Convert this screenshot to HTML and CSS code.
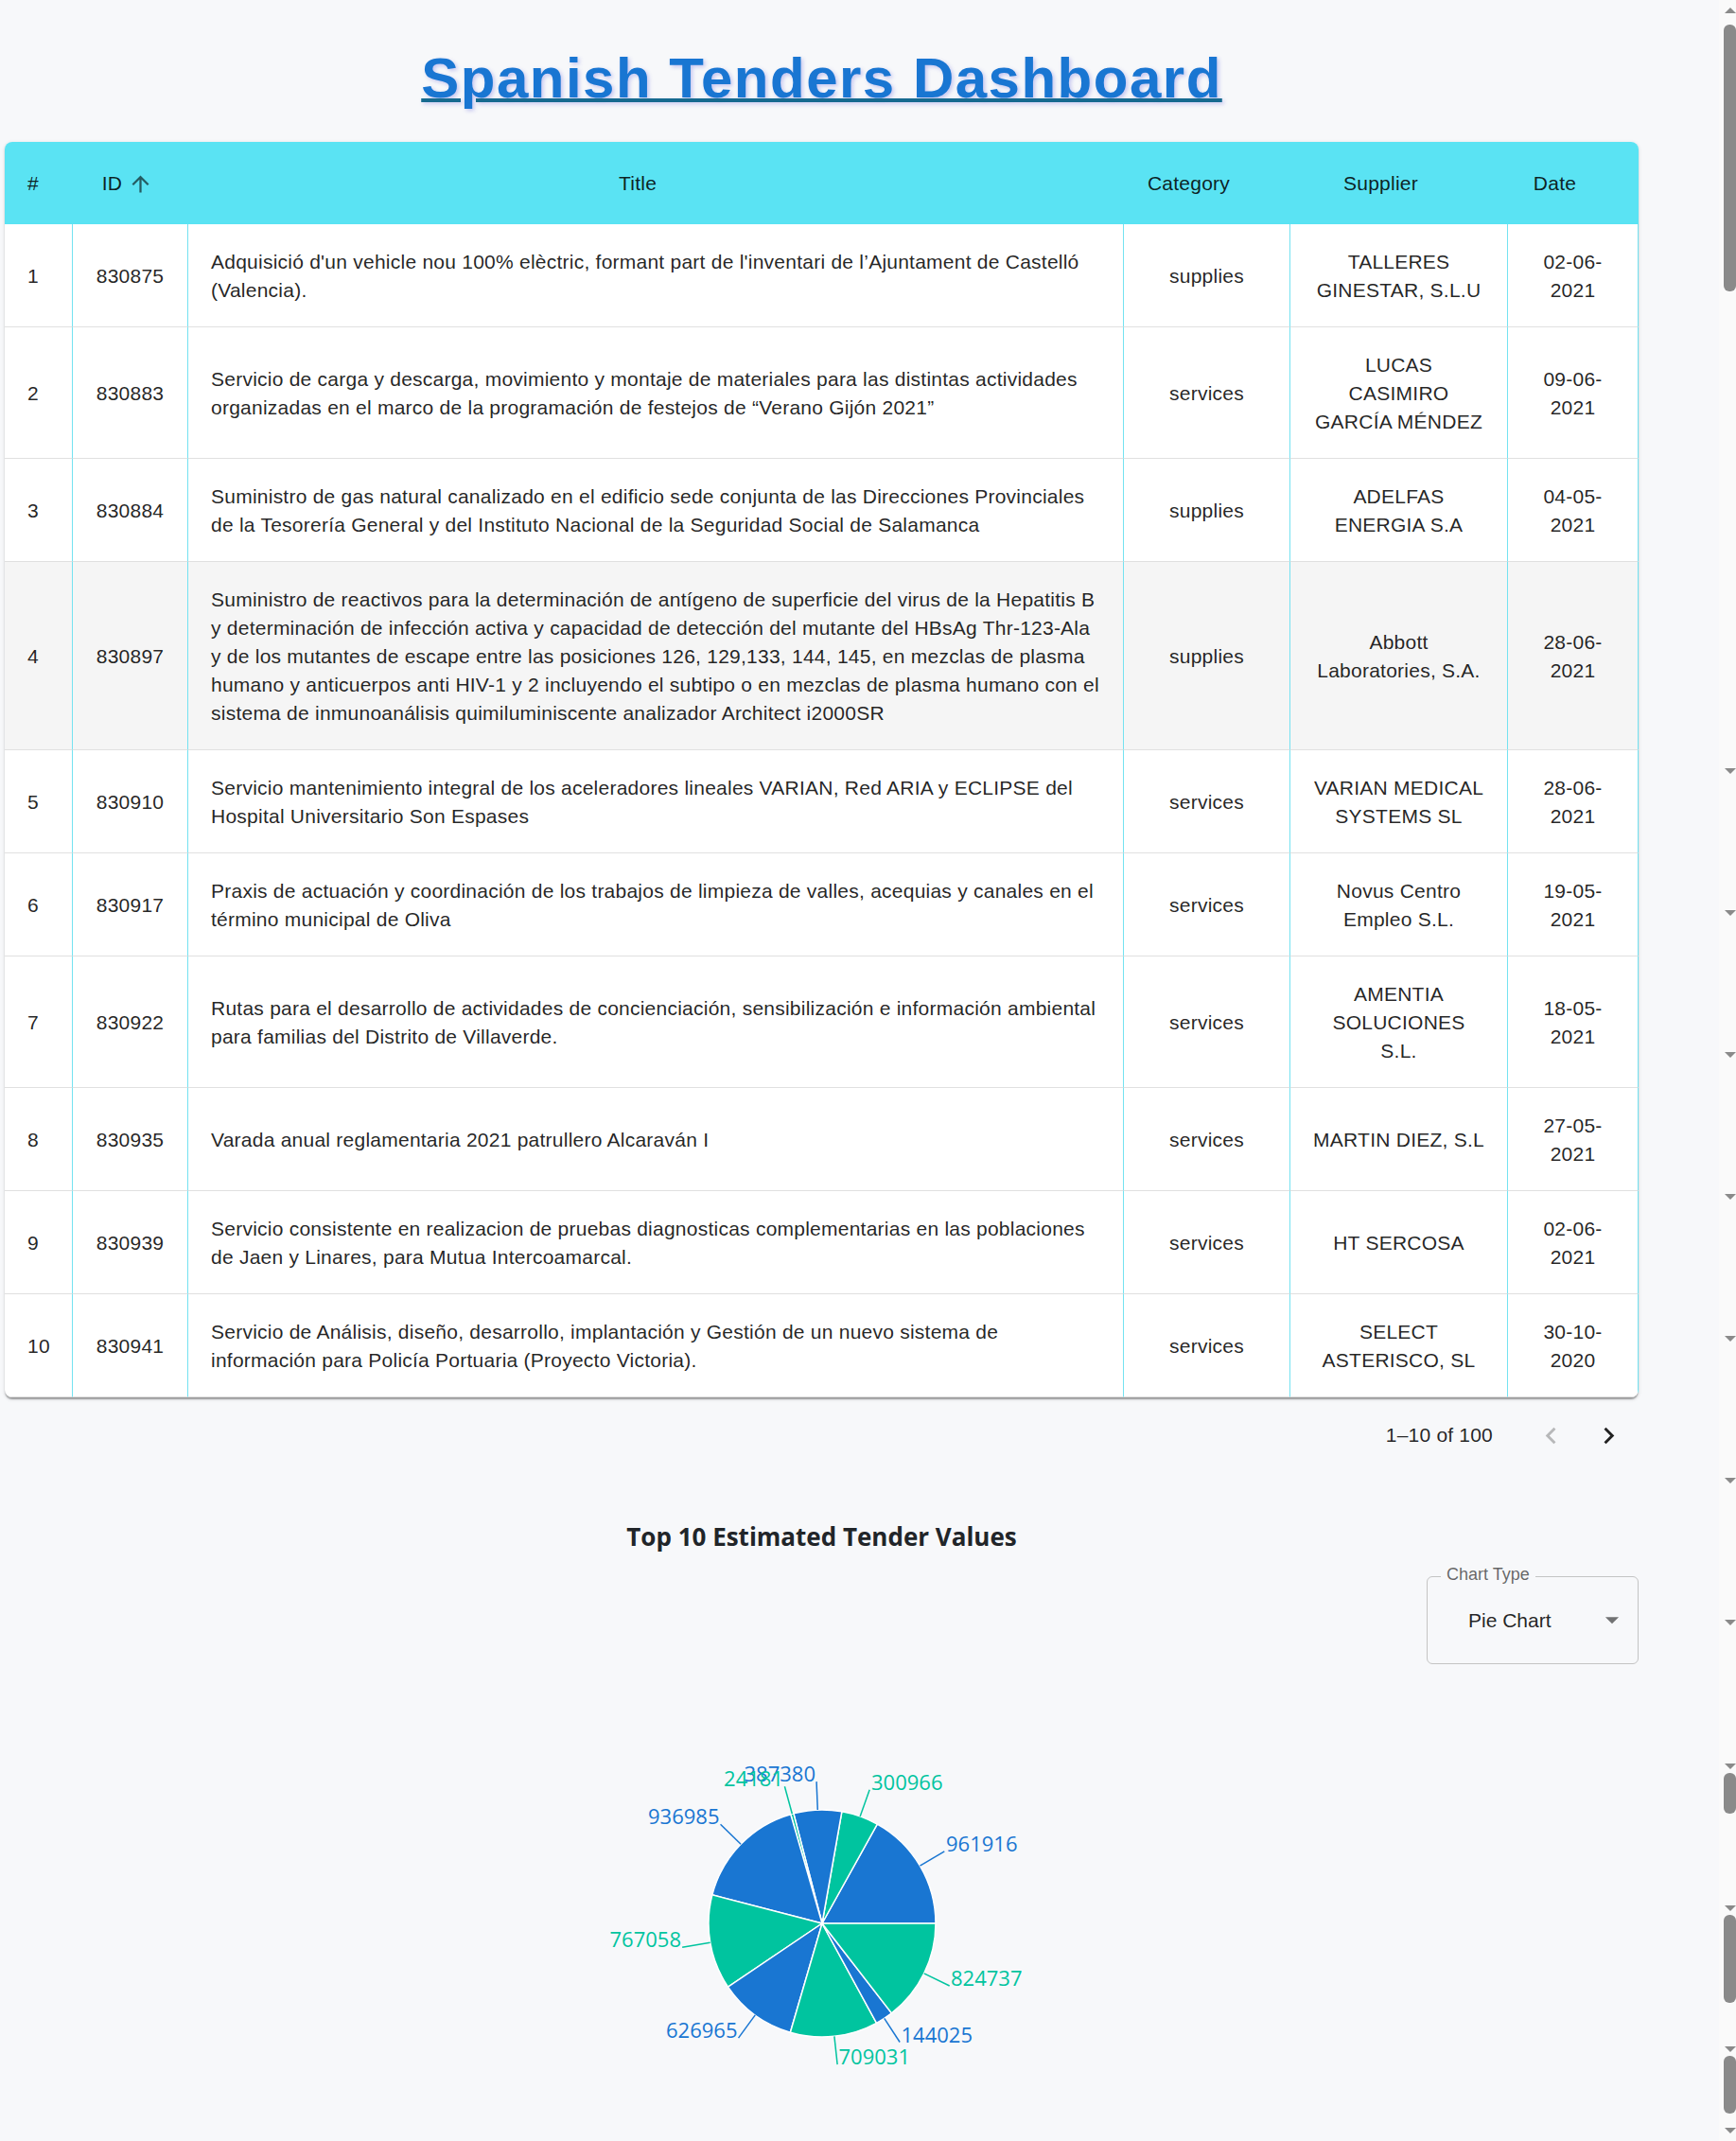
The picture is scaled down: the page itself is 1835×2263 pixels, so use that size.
FILE: index.html
```html
<!DOCTYPE html>
<html lang="es">
<head>
<meta charset="utf-8">
<title>Spanish Tenders Dashboard</title>
<link rel="stylesheet" href="styles.css">
</head>
<body>
<div class="page">
  <h1 class="title">Spanish Tenders Dashboard</h1>

  <div class="card">
    <table class="grid">
      <colgroup>
        <col class="c-num"><col class="c-id"><col class="c-title"><col class="c-cat"><col class="c-sup"><col class="c-date">
      </colgroup>
      <thead>
        <tr>
          <th class="left">#</th>
          <th><span class="sort">ID<svg class="sort-ic" viewBox="0 0 24 24"><path d="M4 12l1.41 1.41L11 7.83V20h2V7.83l5.58 5.59L20 12l-8-8-8 8z"/></svg></span></th>
          <th><span class="sort">Title<span class="sort-gap"></span></span></th>
          <th><span class="sort">Category<span class="sort-gap"></span></span></th>
          <th><span class="sort">Supplier<span class="sort-gap"></span></span></th>
          <th><span class="sort">Date<span class="sort-gap"></span></span></th>
        </tr>
      </thead>
      <tbody>
        <tr>
          <td class="left">1</td><td>830875</td>
          <td class="ttl">Adquisició d'un vehicle nou 100% elèctric, formant part de l'inventari de l’Ajuntament de Castelló (Valencia).</td>
          <td>supplies</td><td class="sup">TALLERES<br>GINESTAR, S.L.U</td><td>02-06-<wbr>2021</td>
        </tr>
        <tr>
          <td class="left">2</td><td>830883</td>
          <td class="ttl">Servicio de carga y descarga, movimiento y montaje de materiales para las distintas actividades organizadas en el marco de la programación de festejos de “Verano Gijón 2021”</td>
          <td>services</td><td class="sup">LUCAS<br>CASIMIRO<br>GARCÍA MÉNDEZ</td><td>09-06-<wbr>2021</td>
        </tr>
        <tr>
          <td class="left">3</td><td>830884</td>
          <td class="ttl">Suministro de gas natural canalizado en el edificio sede conjunta de las Direcciones Provinciales de la Tesorería General y del Instituto Nacional de la Seguridad Social de Salamanca</td>
          <td>supplies</td><td class="sup">ADELFAS<br>ENERGIA S.A</td><td>04-05-<wbr>2021</td>
        </tr>
        <tr class="hover">
          <td class="left">4</td><td>830897</td>
          <td class="ttl">Suministro de reactivos para la determinación de antígeno de superficie del virus de la Hepatitis B y determinación de infección activa y capacidad de detección del mutante del HBsAg Thr-123-Ala y de los mutantes de escape entre las posiciones 126, 129,133, 144, 145, en mezclas de plasma humano y anticuerpos anti HIV-1 y 2 incluyendo el subtipo o en mezclas de plasma humano con el sistema de inmunoanálisis quimiluminiscente analizador Architect i2000SR</td>
          <td>supplies</td><td class="sup">Abbott<br>Laboratories, S.A.</td><td>28-06-<wbr>2021</td>
        </tr>
        <tr>
          <td class="left">5</td><td>830910</td>
          <td class="ttl">Servicio mantenimiento integral de los aceleradores lineales VARIAN, Red ARIA y ECLIPSE del Hospital Universitario Son Espases</td>
          <td>services</td><td class="sup">VARIAN MEDICAL<br>SYSTEMS SL</td><td>28-06-<wbr>2021</td>
        </tr>
        <tr>
          <td class="left">6</td><td>830917</td>
          <td class="ttl">Praxis de actuación y coordinación de los trabajos de limpieza de valles, acequias y canales en el término municipal de Oliva</td>
          <td>services</td><td class="sup">Novus Centro<br>Empleo S.L.</td><td>19-05-<wbr>2021</td>
        </tr>
        <tr>
          <td class="left">7</td><td>830922</td>
          <td class="ttl">Rutas para el desarrollo de actividades de concienciación, sensibilización e información ambiental para familias del Distrito de Villaverde.</td>
          <td>services</td><td class="sup">AMENTIA<br>SOLUCIONES<br>S.L.</td><td>18-05-<wbr>2021</td>
        </tr>
        <tr>
          <td class="left">8</td><td>830935</td>
          <td class="ttl">Varada anual reglamentaria 2021 patrullero Alcaraván I</td>
          <td>services</td><td class="sup">MARTIN DIEZ, S.L</td><td>27-05-<wbr>2021</td>
        </tr>
        <tr>
          <td class="left">9</td><td>830939</td>
          <td class="ttl">Servicio consistente en realizacion de pruebas diagnosticas complementarias en las poblaciones de Jaen y Linares, para Mutua Intercoamarcal.</td>
          <td>services</td><td class="sup">HT SERCOSA</td><td>02-06-<wbr>2021</td>
        </tr>
        <tr>
          <td class="left">10</td><td>830941</td>
          <td class="ttl">Servicio de Análisis, diseño, desarrollo, implantación y Gestión de un nuevo sistema de información para Policía Portuaria (Proyecto Victoria).</td>
          <td>services</td><td class="sup">SELECT<br>ASTERISCO, SL</td><td>30-10-<wbr>2020</td>
        </tr>
      </tbody>
    </table>
  </div>

  <div class="pager">
    <span class="rows">1–10 of 100</span>
    <span class="pbtn disabled"><svg viewBox="0 0 24 24"><path d="M15.41 16.59 10.83 12l4.58-4.59L14 6l-6 6 6 6 1.41-1.41z"/></svg></span>
    <span class="pbtn"><svg viewBox="0 0 24 24"><path d="M8.59 16.59 13.17 12 8.59 7.41 10 6l6 6-6 6-1.41-1.41z"/></svg></span>
  </div>

  <section class="chart-sec">
    <h3 class="chart-title">Top 10 Estimated Tender Values</h3>
    <div class="select-row">
      <div class="select">
        <span class="select-label">Chart Type</span>
        <span class="select-value">Pie Chart</span>
        <svg class="select-ic" viewBox="0 0 24 24"><path d="M7 10l5 5 5-5z"/></svg>
      </div>
    </div>
    <svg class="chart" viewBox="0 0 1727 440">
      <g class="slices">
        <path class="blue" d="M864 253L984 253A120 120 0 0 0 922.30 148.11Z"/>
        <path class="green" d="M864 253L922.30 148.11A120 120 0 0 0 884.85 134.82Z"/>
        <path class="blue" d="M864 253L884.85 134.82A120 120 0 0 0 833.88 136.84Z"/>
        <path class="green" d="M864 253L833.88 136.84A120 120 0 0 0 830.79 137.69Z"/>
        <path class="blue" d="M864 253L830.79 137.69A120 120 0 0 0 747.86 222.79Z"/>
        <path class="green" d="M864 253L747.86 222.79A120 120 0 0 0 764.52 320.12Z"/>
        <path class="blue" d="M864 253L764.52 320.12A120 120 0 0 0 830.36 368.19Z"/>
        <path class="green" d="M864 253L830.36 368.19A120 120 0 0 0 921.51 358.32Z"/>
        <path class="blue" d="M864 253L921.51 358.32A120 120 0 0 0 937.48 347.87Z"/>
        <path class="green" d="M864 253L937.48 347.87A120 120 0 0 0 984 253Z"/>
      </g>
      <g class="lines">
        <path class="l-blue" d="M967.43 192.16L993.29 176.95"/>
        <path class="l-green" d="M904.13 139.91L914.16 111.64"/>
        <path class="l-blue" d="M859.26 133.09L858.07 103.12"/>
        <path class="l-green" d="M832.34 137.25L824.42 108.31"/>
        <path class="l-blue" d="M778.06 169.25L756.57 148.32"/>
        <path class="l-green" d="M745.72 273.25L716.15 278.31"/>
        <path class="l-blue" d="M793.24 349.91L775.55 374.14"/>
        <path class="l-green" d="M876.91 372.30L880.14 402.13"/>
        <path class="l-blue" d="M929.70 353.42L946.13 378.52"/>
        <path class="l-green" d="M971.74 305.83L998.68 319.04"/>
      </g>
      <g class="labels">
        <text class="t-blue" x="995" y="177" text-anchor="start">961916</text>
        <text class="t-green" x="916" y="111.6" text-anchor="start">300966</text>
        <text class="t-blue" x="857" y="103" text-anchor="end">387380</text>
        <text class="t-green" x="823" y="108.3" text-anchor="end">24181</text>
        <text class="t-blue" x="755.5" y="148.3" text-anchor="end">936985</text>
        <text class="t-green" x="715" y="278.3" text-anchor="end">767058</text>
        <text class="t-blue" x="774.5" y="374.1" text-anchor="end">626965</text>
        <text class="t-green" x="881.5" y="402.1" text-anchor="start">709031</text>
        <text class="t-blue" x="947.5" y="378.5" text-anchor="start">144025</text>
        <text class="t-green" x="1000" y="319" text-anchor="start">824737</text>
      </g>
    </svg>
  </section>
</div>

<div class="sb" aria-hidden="true">
  <span class="tri up u0"></span>
  <span class="thumb th0"></span>
  <span class="tri down d1"></span>
  <span class="tri down d2"></span>
  <span class="tri down d3"></span>
  <span class="tri down d4"></span>
  <span class="tri down d5"></span>
  <span class="tri down d6"></span>
  <span class="tri down d7"></span>
  <span class="tri down d8"></span>
  <span class="thumb th1"></span>
  <span class="tri down d9"></span>
  <span class="thumb th2"></span>
  <span class="tri down d10"></span>
  <span class="thumb th3"></span>
  <span class="tri down d11"></span>
</div>
</body>
</html>
```

FILE: styles.css
```css
html, body {
  margin: 0;
  padding: 0;
}

html {
  background: #f7f8fa;
  overflow: hidden;
}

body {
  position: relative;
  width: 1835px;
  height: 2263px;
  overflow: hidden;
  font-family: "Liberation Sans", Arial, sans-serif;
  color: rgba(0, 0, 0, 0.87);
}

.page {
  margin-left: 5px;
  width: 1727px;
}

/* ---------- heading ---------- */
.title {
  margin: 47px 0 0;
  text-align: center;
  font-family: "Liberation Sans", Arial, sans-serif;
  font-weight: 700;
  font-size: 60px;
  line-height: 72px;
  letter-spacing: 1.5px;
  color: #1976d2;
  text-decoration: underline;
  text-decoration-color: #166a8f;
  text-decoration-thickness: 4px;
  text-underline-offset: 1px;
  text-shadow: 2px 2px 4px rgba(80, 80, 220, 0.3);
}

/* ---------- table ---------- */
.card {
  margin-top: 31px;
  background: #fff;
  border-radius: 8px;
  overflow: hidden;
  box-shadow: 0 3px 1.5px -1.5px rgba(0, 0, 0, 0.2),
              0 1.5px 1.5px 0 rgba(0, 0, 0, 0.14),
              0 1.5px 4.5px 0 rgba(0, 0, 0, 0.12);
}

.grid {
  width: 100%;
  table-layout: fixed;
  border-collapse: separate;
  border-spacing: 0;
  font-size: 21px;
  line-height: 30px;
  letter-spacing: 0.24px;
}

.c-num { width: 72px; }
.c-id { width: 122px; }
.c-title { width: 989px; }
.c-cat { width: 176px; }
.c-sup { width: 230px; }
.c-date { width: 138px; }

.grid th {
  padding: 29px 24px 28px;
  background: #5ae3f3;
  font-weight: 400;
  text-align: center;
  vertical-align: middle;
  color: rgba(0, 0, 0, 0.87);
}

.sort {
  display: inline-flex;
  align-items: center;
  height: 30px;
}

.sort-ic {
  width: 27px;
  height: 27px;
  margin: 0 6px;
  fill: rgba(0, 0, 0, 0.6);
}

.sort-gap {
  display: inline-block;
  width: 27px;
  height: 27px;
  margin: 0 6px;
}

.grid td {
  padding: 25px 24px 23px;
  text-align: center;
  vertical-align: middle;
  border-right: 1px solid #74e2f1;
  border-bottom: 1px solid #e0e0e0;
}

.grid th.left,
.grid td.left {
  text-align: left;
}

.grid td.ttl {
  text-align: left;
  padding-right: 25px;
}

.grid td.sup {
  white-space: nowrap;
}

.grid tr.hover td {
  background: #f5f5f5;
}

/* ---------- pagination ---------- */
.pager {
  height: 80px;
  display: flex;
  justify-content: flex-end;
  align-items: center;
  padding-right: 3px;
  gap: 3px;
  font-size: 21px;
  letter-spacing: 0.2px;
}

.rows {
  margin-right: 29px;
}

.pbtn {
  width: 58px;
  height: 58px;
  display: flex;
  align-items: center;
  justify-content: center;
}

.pbtn svg {
  width: 35px;
  height: 35px;
  fill: #222;
}

.pbtn.disabled svg {
  fill: rgba(0, 0, 0, 0.26);
}

/* ---------- chart ---------- */
.chart-title {
  margin: 50px 0 0;
  text-align: center;
  font-family: "Open Sans", "Noto Sans", sans-serif;
  font-weight: 700;
  font-size: 26px;
  line-height: 34px;
  color: #212529;
}

.select-row {
  display: flex;
  justify-content: flex-end;
  margin-top: 25px;
}

.select {
  position: relative;
  box-sizing: border-box;
  width: 224px;
  height: 93px;
  border: 1px solid #c4c4c4;
  border-radius: 6px;
  display: flex;
  align-items: center;
  padding-left: 43px;
  font-size: 21px;
}

.select-label {
  position: absolute;
  left: 14px;
  top: -14px;
  padding: 0 6px;
  background: #f7f8fa;
  font-size: 18px;
  line-height: 22px;
  color: rgba(0, 0, 0, 0.6);
}

.select-ic {
  position: absolute;
  right: 10px;
  top: 28px;
  width: 34px;
  height: 34px;
  fill: rgba(0, 0, 0, 0.54);
}

.chart {
  display: block;
  margin-top: 21px;
  width: 1727px;
  height: 440px;
}

.slices path {
  stroke: #fff;
  stroke-width: 1.5;
}

.blue { fill: #1976d2; }
.green { fill: #00c49f; }

.lines path {
  fill: none;
  stroke-width: 1.5;
}

.l-blue { stroke: #1976d2; }
.l-green { stroke: #00c49f; }

.labels text {
  font-family: "Open Sans", "Noto Sans", sans-serif;
  font-size: 22px;
}

.t-blue { fill: #1976d2; }
.t-green { fill: #00c49f; }

/* ---------- scrollbar strip ---------- */
.sb {
  position: absolute;
  top: 0;
  right: 0;
  width: 18px;
  height: 2263px;
  background: #fafafa;
}

.sb .tri {
  position: absolute;
  right: 0;
  width: 0;
  height: 0;
  border-left: 6.5px solid transparent;
  border-right: 6.5px solid transparent;
}

.sb .up {
  border-bottom: 6px solid #8a8a8a;
}

.sb .down {
  border-top: 6px solid #8a8a8a;
}

.sb .thumb {
  position: absolute;
  right: 0;
  width: 13px;
  background: #8a8a8a;
  border-radius: 6px;
}

.u0 { top: 8px; }
.th0 { top: 26px; height: 282px; }
.d1 { top: 812px; }
.d2 { top: 962px; }
.d3 { top: 1112px; }
.d4 { top: 1262px; }
.d5 { top: 1412px; }
.d6 { top: 1562px; }
.d7 { top: 1712px; }
.d8 { top: 1864px; }
.th1 { top: 1874px; height: 43px; border-radius: 0 0 6px 6px; }
.d9 { top: 2014px; }
.th2 { top: 2024px; height: 93px; border-radius: 0 0 6px 6px; }
.d10 { top: 2163px; }
.th3 { top: 2173px; height: 61px; border-radius: 0 0 6px 6px; }
.d11 { top: 2249px; }
```
